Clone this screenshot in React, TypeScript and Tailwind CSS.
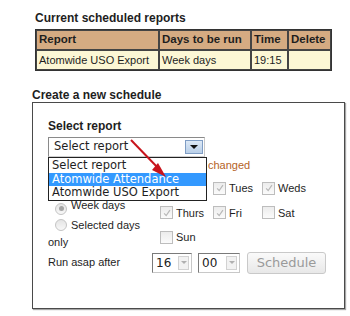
import React from "react";

const Check = () => (
  <svg viewBox="0 0 12 12" className="w-[10px] h-[10px]">
    <path d="M2.5 6.5 L5 9 L9.5 2.5" fill="none" stroke="#b8b8b8" strokeWidth={1.4} />
  </svg>
);

function Box({ checked, label, hidden }: { checked?: boolean; label: string; hidden?: boolean }) {
  return (
    <div className={`flex items-center h-[24px] ${hidden ? "invisible" : ""}`}>
      <span className="w-[13px] h-[13px] border border-[#bdbdbd] bg-gradient-to-b from-[#ececec] to-[#fbfbfb] flex items-center justify-center shrink-0">
        {checked && <Check />}
      </span>
      <span className="ml-[3px]">{label}</span>
    </div>
  );
}

function Radio({ on, label, hidden }: { on?: boolean; label: string; hidden?: boolean }) {
  return (
    <div className={`leading-[17px] mt-[2px] ${hidden ? "invisible" : ""}`}>
      <span className="inline-flex items-center justify-center align-[-2px] ml-[7px] mr-[4px] w-[12px] h-[12px] rounded-full border border-[#c4c4c4] bg-gradient-to-b from-[#e4e4e4] to-[#f8f8f8]">
        {on && <span className="w-[5px] h-[5px] rounded-full bg-[#a5a5a5]" />}
      </span>
      {label}
    </div>
  );
}

function SmallSelect({ value, w }: { value: string; w: string }) {
  return (
    <div className={`${w} h-[20px] flex items-center border border-[#c8c8c8] border-l-[#7a7a7a] border-t-[#7a7a7a] bg-white`}>
      <span className="flex-1 pl-[3px] font-['DejaVu_Sans',sans-serif] text-[12px] text-[#222]">{value}</span>
      <span className="w-[11px] h-[14px] mr-[2px] border border-[#d2d2d2] bg-[#f2f2f2] flex items-center justify-center">
        <span className="w-0 h-0 border-l-[3px] border-r-[3px] border-t-[3px] border-l-transparent border-r-transparent border-t-[#b0b0b0]" />
      </span>
    </div>
  );
}

export default function App() {
  return (
    <div className="relative w-[350px] h-[316px] bg-white text-[#1e1e1e] font-['Liberation_Sans',Arial,sans-serif] text-[11px] overflow-hidden">
      {/* current reports */}
      <div className="pt-[11px] pl-[35px]">
        <div className="font-bold text-[12px] leading-[14px]">Current scheduled reports</div>
        <table className="mt-[4px] w-[297px] table-fixed border-separate border-spacing-0 border border-[#333] text-left whitespace-nowrap">
          <thead>
            <tr className="bg-[#d5ab82] h-[20px] text-[11.5px]">
              <th className="w-[123px] border border-[#444] px-[2px] font-bold">Report</th>
              <th className="w-[92px] border border-[#444] px-[2px] font-bold">Days to be run</th>
              <th className="w-[37px] border border-[#444] px-[2px] font-bold">Time</th>
              <th className="border border-[#444] px-[2px] font-bold">Delete</th>
            </tr>
          </thead>
          <tbody>
            <tr className="bg-[#fcf7d5] h-[20px]">
              <td className="border border-[#444] px-[2px]">Atomwide USO Export</td>
              <td className="border border-[#444] px-[2px]">Week days</td>
              <td className="border border-[#444] px-[2px]">19:15</td>
              <td className="border border-[#444] px-[2px]"></td>
            </tr>
          </tbody>
        </table>
      </div>

      {/* new schedule */}
      <div className="pl-[32px] mt-[18px]">
        <div className="font-bold text-[12px] leading-[13px]">Create a new schedule</div>
        <div className="w-[313px] h-[207px] border border-[#4a4a4a] shadow-[1px_1px_1px_rgba(0,0,0,0.35)] pl-[15px] pt-[16px]">
          <div className="font-bold text-[12px] leading-[14px]">Select report</div>

          <div className="relative mt-[4px] w-[157px] h-[20px] border border-[#8a8a8a] border-r-[#c8c8c8] border-b-[#d0d0d0] bg-white flex items-center font-['DejaVu_Sans',sans-serif] text-[11.5px]">
            <span className="flex-1 pl-[5px]">Select report</span>
            <span className="w-[18px] h-[14px] mr-[1px] border border-[#7f9dc4] bg-gradient-to-b from-[#dde9f6] to-[#b9cfe8] flex items-center justify-center">
              <span className="w-0 h-0 border-l-[4px] border-r-[4px] border-t-[4px] border-l-transparent border-r-transparent border-t-[#111]" />
            </span>
            <div className="absolute left-[-1px] top-[19px] w-[159px] border border-[#222] bg-white z-10 leading-[13px] pb-[1px]">
              <div className="px-[3px] h-[15px] leading-[15px]">Select report</div>
              <div className="px-[3px] h-[13px] bg-[#3399ff] text-white">Atomwide Attendance</div>
              <div className="px-[3px] h-[13px]">Atomwide USO Export</div>
            </div>
          </div>

          <div className="flex h-[16px] items-center text-[#b5631f]">
            <span className="invisible w-[160px] text-right overflow-hidden whitespace-nowrap">Run only if data has&nbsp;</span>
            <span>changed</span>
          </div>

          <div className="flex mt-[3px]">
            <div className="w-[112px]">
              <Radio hidden label="Every day" />
              <Radio on label="Week days" />
              <Radio label="Selected days only" />
            </div>
            <div className="grid grid-cols-[53px_49px_60px]">
              <Box hidden checked label="Mon" />
              <Box checked label="Tues" />
              <Box checked label="Weds" />
              <Box checked label="Thurs" />
              <Box checked label="Fri" />
              <Box label="Sat" />
              <Box label="Sun" />
            </div>
          </div>

          <div className="flex items-center mt-[1px]">
            <span className="w-[104px]">Run asap after</span>
            <SmallSelect value="16" w="w-[40px]" />
            <div className="w-[6px]" />
            <SmallSelect value="00" w="w-[42px]" />
            <div className="w-[7px]" />
            <button className="w-[79px] h-[22px] rounded-[3px] border border-[#c9c9c9] bg-gradient-to-b from-[#fafafa] to-[#e8e8e8] text-[#9a9a9a] text-[13px] font-['DejaVu_Sans',sans-serif]">
              Schedule
            </button>
          </div>
        </div>
      </div>

      {/* red arrow annotation */}
      <svg className="absolute left-0 top-0 pointer-events-none z-20" width="350" height="316">
        <line x1="131" y1="140" x2="160" y2="170" stroke="#c8141c" strokeWidth={2} />
        <polygon points="166,177 158,163 152,170" fill="#c8141c" />
      </svg>
    </div>
  );
}
